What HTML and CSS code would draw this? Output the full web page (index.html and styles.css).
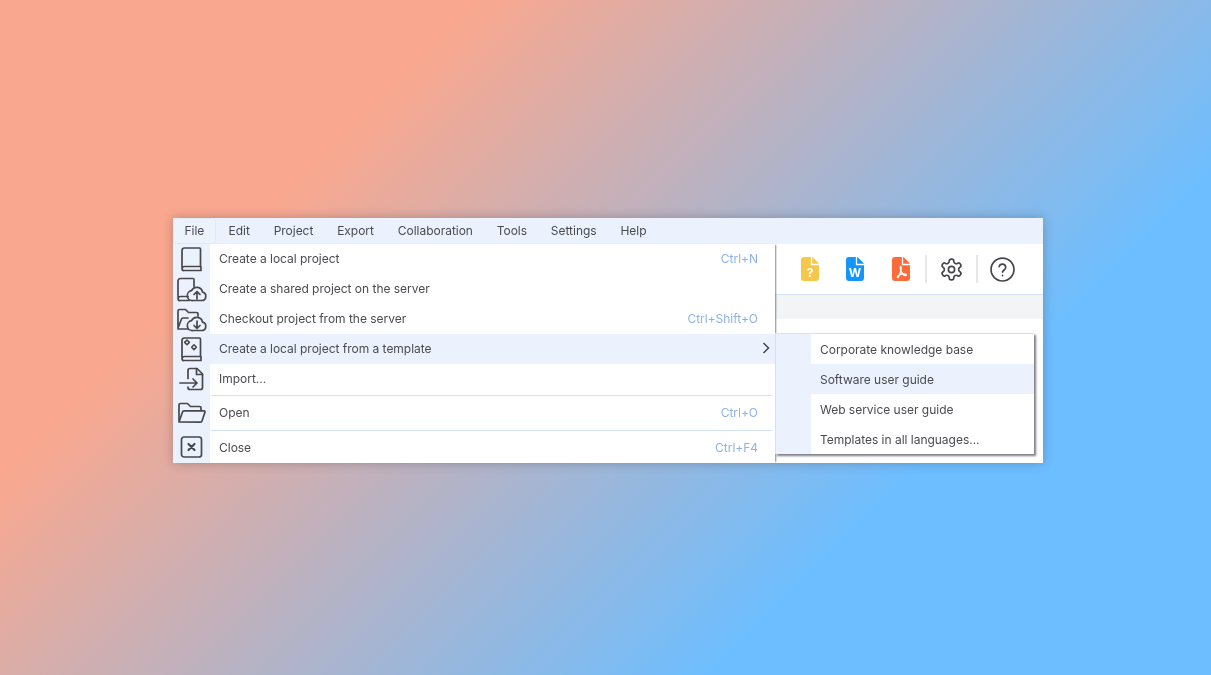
FILE: index.html
```html
<!DOCTYPE html>
<html lang="en">
<head>
<meta charset="utf-8">
<title>File menu</title>
<link rel="stylesheet" href="styles.css">
</head>
<body>
<div class="window">
  <nav class="menubar">
    <span class="menu-title active">File</span>
    <span class="menu-title">Edit</span>
    <span class="menu-title">Project</span>
    <span class="menu-title">Export</span>
    <span class="menu-title">Collaboration</span>
    <span class="menu-title">Tools</span>
    <span class="menu-title">Settings</span>
    <span class="menu-title">Help</span>
  </nav>
  <div class="content">
    <div class="toolbar">
      <svg class="doc" viewBox="0 0 18 24"><path class="doc-yellow" d="M3 0h8.500L18 6.500V21a3 3 0 0 1-3 3H3a3 3 0 0 1-3-3V3a3 3 0 0 1 3-3z"/><path class="fold" d="M10.500 0v7.500H18"/><text class="doc-q" x="9" y="20" text-anchor="middle">?</text></svg>
      <svg class="doc" viewBox="0 0 18 24"><path class="doc-blue" d="M3 0h8.500L18 6.500V21a3 3 0 0 1-3 3H3a3 3 0 0 1-3-3V3a3 3 0 0 1 3-3z"/><path class="fold" d="M10.500 0v7.500H18"/><text class="doc-w" x="9" y="20" text-anchor="middle">W</text></svg>
      <svg class="doc" viewBox="0 0 18 24"><path class="doc-orange" d="M3 0h8.500L18 6.500V21a3 3 0 0 1-3 3H3a3 3 0 0 1-3-3V3a3 3 0 0 1 3-3z"/><path class="fold" d="M10.500 0v7.500H18"/><path class="pdf" d="M8.800 9.500c-.7 0-.5 3 1 6 1 2 2.500 3 3.700 3 1.100 0 1.100-1-.5-1.400-2-.5-5.500.2-7.200 2.200-.9 1.100-.2 1.800.6 1C8 18.500 9.600 10 8.800 9.500z"/></svg>
      <span class="divider"></span>
      <svg class="tool" viewBox="0 0 24 24"><path d="M12.220 2h-.44a2 2 0 0 0-2 2v.18a2 2 0 0 1-1 1.730l-.43.25a2 2 0 0 1-2 0l-.15-.08a2 2 0 0 0-2.730.73l-.22.38a2 2 0 0 0 .73 2.730l.15.1a2 2 0 0 1 1 1.720v.51a2 2 0 0 1-1 1.740l-.15.09a2 2 0 0 0-.73 2.730l.22.38a2 2 0 0 0 2.730.73l.15-.08a2 2 0 0 1 2 0l.43.25a2 2 0 0 1 1 1.730V20a2 2 0 0 0 2 2h.44a2 2 0 0 0 2-2v-.18a2 2 0 0 1 1-1.730l.43-.25a2 2 0 0 1 2 0l.15.08a2 2 0 0 0 2.730-.73l.22-.39a2 2 0 0 0-.73-2.730l-.15-.08a2 2 0 0 1-1-1.740v-.5a2 2 0 0 1 1-1.740l.15-.09a2 2 0 0 0 .73-2.730l-.22-.38a2 2 0 0 0-2.730-.73l-.15.08a2 2 0 0 1-2 0l-.43-.25a2 2 0 0 1-1-1.730V4a2 2 0 0 0-2-2z"/><circle cx="12" cy="12" r="3"/></svg>
      <span class="divider"></span>
      <svg class="tool help" viewBox="0 0 24 24"><circle cx="12" cy="12" r="11"/><path d="M8.800 9.200a3.200 3.200 0 0 1 6.300.8c0 2.200-3.100 2.700-3.100 4.600"/><path d="M12 17.600v.4"/></svg>
    </div>
    <div class="band"></div>
  </div>

  <div class="dropdown">
    <div class="item">
      <svg class="icon" viewBox="0 0 37 30"><path d="M9 23V6.500A2.500 2.500 0 0 1 11.500 4H26.500a1 1 0 0 1 1 1v17.500H11.500A2.500 2.500 0 0 0 9 25a1.800 1.800 0 0 0 2 1.500h17v-4"/></svg>
      <div class="label"><span>Create a local project</span><span class="shortcut">Ctrl+N</span></div>
    </div>
    <div class="item">
      <svg class="icon" viewBox="0 0 37 30"><path d="M5 23V7a2.500 2.500 0 0 1 2.500-2.500H20a1 1 0 0 1 1 1v7M15 22.500H7.500A2.500 2.500 0 0 0 5 25a1.800 1.800 0 0 0 2 1.500h9"/><path d="M20 26.500h8.500a4.200 4.200 0 0 0 1-8.300 5.800 5.800 0 0 0-11-1.500 4.900 4.900 0 0 0 1.500 9.800z"/><path d="M24 25v-7M21 20.500l3-3 3 3"/></svg>
      <div class="label"><span>Create a shared project on the server</span></div>
    </div>
    <div class="item">
      <svg class="icon" viewBox="0 0 37 30"><path d="M5 24V7a1.500 1.500 0 0 1 1.500-1.500h6l3 3h8a1.500 1.500 0 0 1 1.500 1.500v2M5 24l3.500-9a1.500 1.500 0 0 1 1.400-1H15M5 25h10"/><path d="M20 26.500h8.500a4.200 4.200 0 0 0 1-8.300 5.800 5.800 0 0 0-11-1.500 4.900 4.900 0 0 0 1.500 9.800z"/><path d="M24 17v7M21 21.500l3 3 3-3"/></svg>
      <div class="label"><span>Checkout project from the server</span><span class="shortcut">Ctrl+Shift+O</span></div>
    </div>
    <div class="item selected">
      <svg class="icon" viewBox="0 0 37 30"><path d="M9 23V6.500A2.500 2.500 0 0 1 11.500 4H26.500a1 1 0 0 1 1 1v17.500H11.500A2.500 2.500 0 0 0 9 25a1.800 1.800 0 0 0 2 1.500h17v-4"/><path class="gem" d="M14 6l2.400 2.400-2.400 2.400-2.400-2.400zM21 10.800l2.400 2.400-2.400 2.400-2.400-2.400z"/></svg>
      <div class="label"><span>Create a local project from a template</span><svg class="chevron" viewBox="0 0 8 12"><path d="M1.500 1l5 5-5 5"/></svg></div>
    </div>
    <div class="item import">
      <svg class="icon" viewBox="0 0 37 30"><path d="M15 14V6a2 2 0 0 1 2-2h7l5.500 5.500V23a2 2 0 0 1-2 2H17a2 2 0 0 1-2-2v-.5"/><path d="M23.500 4v6h6"/><path d="M7 18.500h17M20 14.500l4 4-4 4"/></svg>
      <div class="label"><span>Import...</span></div>
    </div>
    <div class="item open">
      <svg class="icon" viewBox="0 0 37 34"><path d="M6 25V9.500A1.500 1.500 0 0 1 7.500 8h7l3 3h9a1.500 1.500 0 0 1 1.500 1.500V15"/><path d="M6 26.500l3.500-10a2 2 0 0 1 1.500-1.200h20a1 1 0 0 1 1 1.300l-3 9a2 2 0 0 1-1.500 1z"/></svg>
      <div class="label ruled"><span>Open</span><span class="shortcut">Ctrl+O</span></div>
    </div>
    <div class="item close">
      <svg class="icon" viewBox="0 0 37 33"><rect x="8.500" y="7" width="20" height="20" rx="2.500"/><path class="cross" d="M15.500 14l6 6M21.500 14l-6 6"/></svg>
      <div class="label ruled"><span>Close</span><span class="shortcut">Ctrl+F4</span></div>
    </div>
  </div>

  <div class="submenu">
    <div class="sub-item"><span>Corporate knowledge base</span></div>
    <div class="sub-item selected"><span>Software user guide</span></div>
    <div class="sub-item"><span>Web service user guide</span></div>
    <div class="sub-item"><span>Templates in all languages...</span></div>
  </div>
</div>
</body>
</html>
```

FILE: styles.css
```css
* { box-sizing: border-box; }

html, body { margin: 0; height: 100%; }

body {
  padding: 218px 0 0 173px;
  overflow: hidden;
  background: linear-gradient(135deg, #f9a88f 0%, #f9a88f 25.500%, #6dbeff 73.500%, #6dbeff 100%);
  font-family: Inter, "Liberation Sans", sans-serif;
  font-size: 12px;
  letter-spacing: -0.02px;
  color: #4a4a50;
}

.window {
  position: relative;
  width: 870px;
  height: 245px;
  background: #fff;
  box-shadow: 0 0 10px rgba(40, 40, 50, 0.28);
}

.menubar, .content, .dropdown, .submenu { filter: blur(0.35px); }

/* menu bar */
.menubar {
  display: flex;
  height: 26px;
  background: #ebf2fd;
}

.menu-title {
  display: flex;
  align-items: center;
  padding: 0 11.900px 1px;
}

.menu-title.active {
  background: #edf3fc;
  border: 1px solid #e0eafa;
  border-radius: 3px;
  padding: 0 10.500px 2px;
  margin-right: 0.800px;
}

/* toolbar underneath */
.content {
  display: flex;
  flex-direction: column;
}

.toolbar {
  display: flex;
  align-items: center;
  justify-content: flex-end;
  height: 51px;
  padding-right: 28px;
  border-bottom: 1px solid #d3e2fa;
  background: #fff;
}

.doc {
  width: 18px;
  height: 24px;
  margin-right: 27.500px;
}

.doc:nth-child(3) { margin-right: 23.500px; }

.doc-yellow { fill: #f5c84c; }
.doc-blue { fill: #1296fb; }
.doc-orange { fill: #fb6b3c; }

.fold {
  fill: none;
  stroke: #fff;
  stroke-width: 1.300;
}

.doc-q, .doc-w {
  fill: #fff;
  font-family: Inter, "Liberation Sans", sans-serif;
  font-weight: 700;
  font-size: 12px;
}

.pdf {
  fill: none;
  stroke: #fff;
  stroke-width: 1.400;
}

.divider {
  width: 1.500px;
  height: 28px;
  background: #e6e7ea;
}

.doc + .divider { margin-right: 12px; margin-left: -8px; }

.tool {
  width: 25px;
  height: 25px;
  fill: none;
  stroke: #45454a;
  stroke-width: 1.600;
  stroke-linecap: round;
  stroke-linejoin: round;
}

.tool + .divider { margin: 0 12.500px; }

.band {
  height: 24px;
  background: #f3f4f6;
}

/* file menu */
.dropdown {
  position: absolute;
  top: 26px;
  left: 0;
  width: 602px;
  height: 219px;
  background: #fff;
  box-shadow: 2px 0 1.500px -1px rgba(40, 40, 50, 0.55);
}

.item {
  display: grid;
  grid-template-columns: 37px 1fr;
  height: 30px;
  background: #fff;
}

.item.selected { background: #ebf2fd; }
.item.import { height: 31px; }
.item.open { height: 35px; }
.item.close { height: 33px; }

.icon {
  display: block;
  width: 37px;
  height: 100%;
  background: #ebf2fd;
  fill: none;
  stroke: #48484c;
  stroke-width: 1.700;
  stroke-linecap: round;
  stroke-linejoin: round;
}

.cross { stroke-width: 2.200; }
.gem { stroke-width: 1.500; }

.label {
  display: flex;
  align-items: center;
  justify-content: space-between;
  padding: 0 17px 2px 9px;
}

.item.import .label { padding-bottom: 3px; }

.label.ruled {
  margin-left: 1px;
  margin-right: 3px;
  padding: 0 14px 0 8px;
  border-top: 1px solid #d3e2fa;
}

.item.open .label.ruled { padding-bottom: 2px; }

.shortcut { color: #8fb2e6; }

.chevron {
  width: 8px;
  height: 12px;
  margin-right: -12px;
  fill: none;
  stroke: #45454a;
  stroke-width: 1.500;
}

/* template submenu */
.submenu {
  position: absolute;
  top: 115px;
  left: 602px;
  width: 259px;
  background: #fff;
  border: 1px solid #d3e2fa;
  border-width: 1px 0 0 1px;
  box-shadow: 2px 2px 2px rgba(40, 40, 50, 0.6);
}

.sub-item {
  height: 30px;
  padding-left: 35px;
  background: #ebf2fd;
}

.sub-item span {
  display: flex;
  align-items: center;
  height: 100%;
  padding-left: 9px;
  background: #fff;
}

.sub-item.selected span { background: #ebf2fd; }
```
